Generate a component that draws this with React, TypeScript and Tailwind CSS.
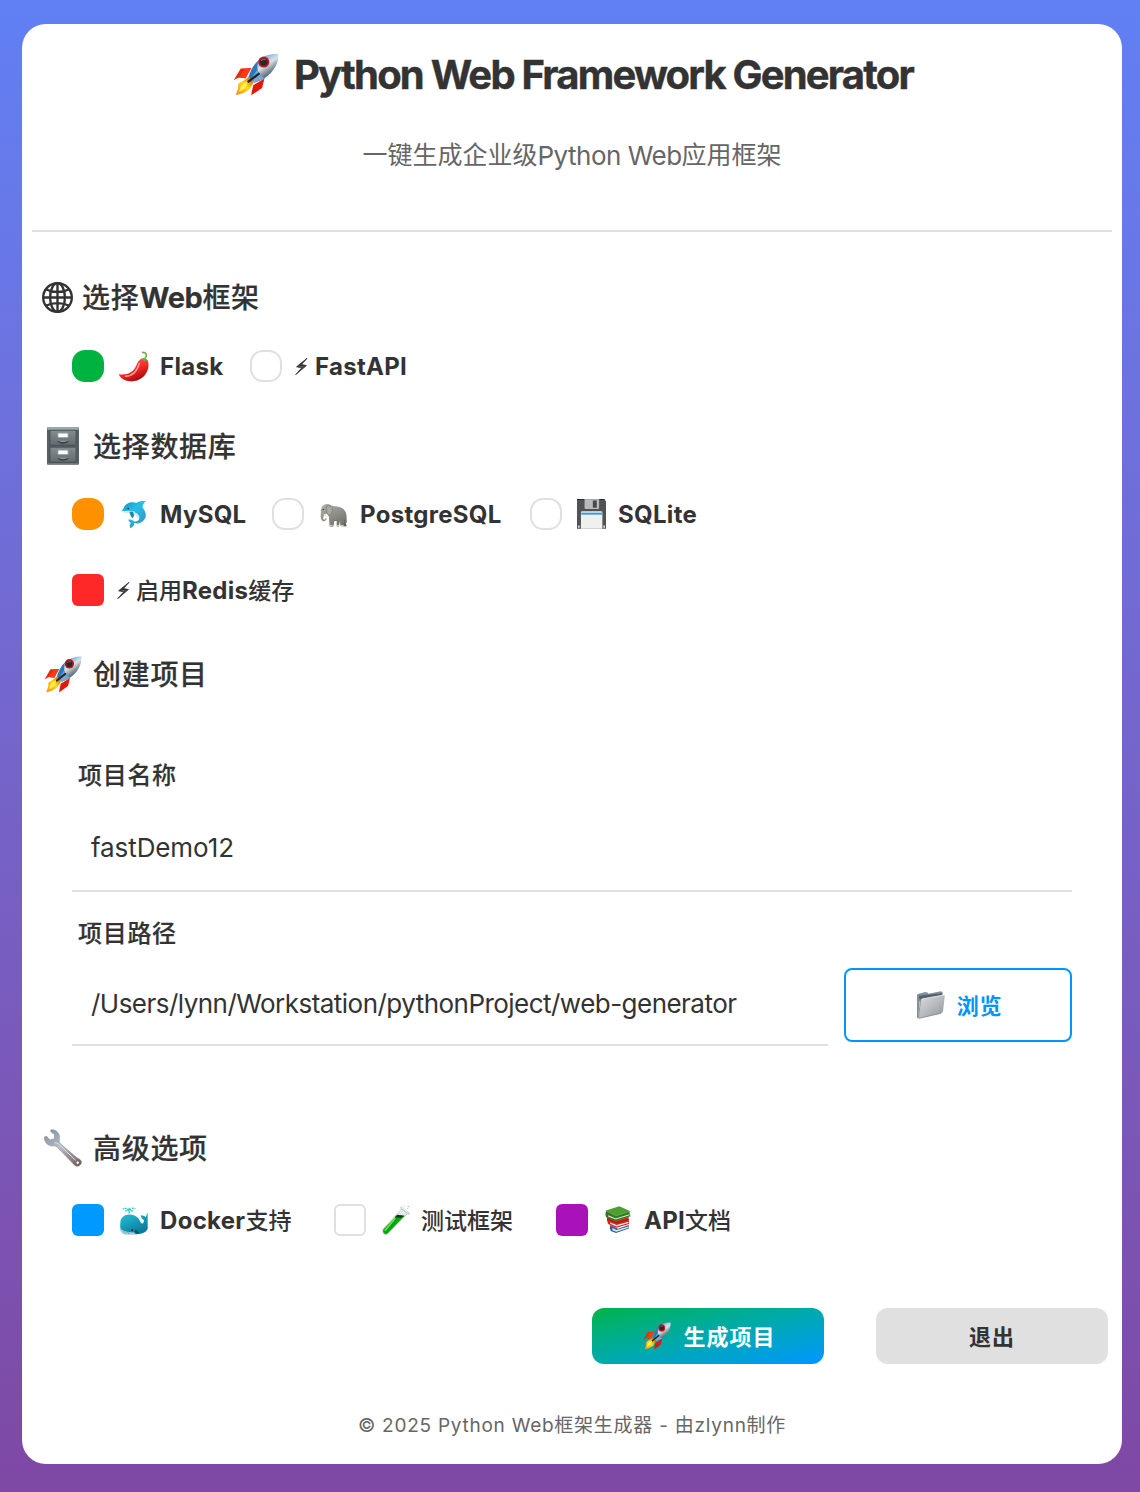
import type { ReactNode } from "react";

type IconProps = { className?: string };

function Rocket({ className = "" }: IconProps) {
  return (
    <svg viewBox="0 0 136 128" className={className} preserveAspectRatio="none">
      <defs>
        <linearGradient id="rk" x1="0.3" y1="0.2" x2="0.75" y2="0.85">
          <stop offset="0" stopColor="#6fa5d8" />
          <stop offset="0.4" stopColor="#dbe3e6" />
          <stop offset="0.65" stopColor="#8b989e" />
          <stop offset="1" stopColor="#16466f" />
        </linearGradient>
        <linearGradient id="rf" x1="1" y1="0" x2="0" y2="1">
          <stop offset="0" stopColor="#d7420b" />
          <stop offset="0.45" stopColor="#ffd91c" />
          <stop offset="1" stopColor="#f58a12" />
        </linearGradient>
      </defs>
      <path d="M54 45 23 46 2 81 17 73 37 75Z" fill="#e92a0c" />
      <path d="M54 45 35 49 18 73 37 75Z" fill="#ff3b17" />
      <path d="M93 76 86 104 54 126 56 112 60 96Z" fill="#e3170a" />
      <path d="M48 70 34 80 16 91 15 106 8 126 31 119 49 108 61 87Z" fill="url(#rf)" />
      <path d="M43 84 24 97 18 115 38 104Z" fill="#fff04a" />
      <path d="M134 2C111 1 92 8 77 20 62 34 52 52 46 71L64 88C84 82 101 72 113 58 127 42 136 21 134 2Z" fill="url(#rk)" />
      <path d="M75 22C60 36 52 54 46 71L64 88 94 75C78 70 66 52 75 22Z" fill="#2d77bd" />
      <path d="M72 50 55 75 64 88 94 75C84 72 77 62 72 50Z" fill="#77a9d1" />
      <path d="M76 62 46 85" stroke="#22262c" strokeWidth="7" strokeLinecap="round" />
      <circle cx="91" cy="27" r="16.5" fill="#c91119" />
      <circle cx="91" cy="27" r="11" fill="#27292e" />
      <path d="M84 24a9 9 0 0 1 12-4" stroke="#777f86" strokeWidth="3" fill="none" />
    </svg>
  );
}

function Globe({ className = "" }: IconProps) {
  return (
    <svg viewBox="0 0 92 92" className={className} fill="none" stroke="#333" strokeWidth="7">
      <circle cx="46" cy="46" r="42.5" />
      <ellipse cx="46" cy="46" rx="22" ry="42.5" />
      <path d="M46 3V89M3 46H89M13 22C31 32 61 32 79 22M13 70C31 60 61 60 79 70" />
    </svg>
  );
}

function Bolt({ className = "" }: IconProps) {
  return (
    <svg viewBox="0 0 38 52" className={className}>
      <path d="M36 1 4 27 20 30 1 51 34 23 19 20Z" fill="#333" stroke="#333" strokeWidth="2.5" strokeLinejoin="round" />
      <path d="M13 24.5 27 27 24 29 11 26Z" fill="#fff" opacity="0.3" />
    </svg>
  );
}

function Pepper({ className = "" }: IconProps) {
  return (
    <svg viewBox="0 0 92 92" className={className}>
      <defs>
        <linearGradient id="pp" x1="0.3" y1="0.2" x2="0.7" y2="0.9">
          <stop offset="0" stopColor="#ff5146" />
          <stop offset="0.6" stopColor="#e5201f" />
          <stop offset="1" stopColor="#a50c10" />
        </linearGradient>
      </defs>
      <path d="M2 69C28 73 47 62 54 43 59 28 67 21 78 23 90 23 92 38 90 50 84 78 60 92 35 90 18 88 7 80 2 69Z" fill="url(#pp)" />
      <path d="M63 37C57 60 42 74 22 75" stroke="#ff9d95" strokeWidth="4" strokeLinecap="round" fill="none" />
      <path d="M64 27C70 18 84 17 91 32L84 28 78 31 73 25Z" fill="#76a83b" />
      <path d="M81 21C88 12 84 4 73 4" stroke="#79aa43" strokeWidth="5" strokeLinecap="round" fill="none" />
    </svg>
  );
}

function Cabinet({ className = "" }: IconProps) {
  return (
    <svg viewBox="0 0 96 113" className={className}>
      <defs>
        <linearGradient id="cb" x1="0" y1="0" x2="0" y2="1">
          <stop offset="0" stopColor="#838e91" />
          <stop offset="1" stopColor="#626c70" />
        </linearGradient>
      </defs>
      <rect width="96" height="113" rx="3" fill="#566166" />
      <rect x="1" width="94" height="8" rx="2" fill="#a2adb0" />
      {[9, 60].map((y) => (
        <g key={y}>
          <rect x="9" y={y} width="78" height="45" fill="url(#cb)" stroke="#3c454a" strokeWidth="2" />
          <rect x="31" y={y + 7} width="34" height="16" rx="2" fill="#929b9e" />
          <rect x="34" y={y + 10} width="28" height="11" fill="#fff" />
          <path d={`M33 ${y + 32}Q48 ${y + 43} 63 ${y + 32}`} fill="none" stroke="#353e42" strokeWidth="7" />
          <path d={`M34 ${y + 31}Q48 ${y + 37} 62 ${y + 31}`} fill="none" stroke="#8d999e" strokeWidth="4" />
        </g>
      ))}
      <path d="M1 110H95" stroke="#8b979b" strokeWidth="2" />
    </svg>
  );
}

function Dolphin({ className = "" }: IconProps) {
  return (
    <svg viewBox="0 0 80 88" className={className}>
      <defs>
        <linearGradient id="dl" x1="0" y1="0" x2="0.8" y2="1">
          <stop offset="0" stopColor="#0b8fbd" />
          <stop offset="0.45" stopColor="#28bdeb" />
          <stop offset="1" stopColor="#3794b8" />
        </linearGradient>
      </defs>
      <path d="M5 36C22 44 28 38 38 42 54 50 60 62 54 70 66 74 73 60 66 42L40 26Z" fill="#d2e9ef" />
      <path d="M2 34C6 31 9 29 10 25 16 9 34 4 49 9 57 3 68 2 77 3 71 9 68 15 67 22 81 39 81 57 66 66 56 73 46 72 41 69 44 75 40 80 31 86 27 80 28 74 32 69 27 66 24 63 25 59 33 59 38 61 42 65 58 66 63 52 52 42 40 32 20 37 2 34Z" fill="url(#dl)" />
      <path d="M3 34C18 37 29 31 44 37" fill="none" stroke="#d7f1f6" strokeWidth="3" />
      <path d="M37 35C43 42 43 51 37 55 31 50 29 43 28 36Z" fill="#1689b0" />
      <circle cx="24" cy="26" r="2.5" fill="#123" />
    </svg>
  );
}

function Elephant({ className = "" }: IconProps) {
  return (
    <svg viewBox="0 0 84 74" className={className}>
      <defs>
        <linearGradient id="el" x1="0" y1="0" x2="0.6" y2="1">
          <stop offset="0" stopColor="#b3b2ac" />
          <stop offset="1" stopColor="#75746f" />
        </linearGradient>
      </defs>
      <path d="M27 38 31 70 40 70 42 54 59 52 71 70 80 69 74 43Z" fill="#62615c" />
      <path d="M6 11C13 0 27 1 35 8 49 10 66 11 74 22 82 32 79 44 81 57L76 60 74 43 71 69 62 69 59 50C53 54 47 53 43 51L38 69 29 69 27 41 20 31C14 35 8 40 10 48 13 51 16 49 16 45L20 46C18 56 8 57 4 49 -1 38 5 30 2 22Z" fill="url(#el)" />
      <path d="M19 9C30 3 41 12 36 26 33 37 25 39 20 29Z" fill="#a9a8a2" stroke="#777670" strokeWidth="2" />
      <path d="M12 33C15 39 19 42 25 41" stroke="#f4efdc" strokeWidth="4" fill="none" />
      <circle cx="10" cy="19" r="2" fill="#333" />
      <path d="M50 51 50 70 57 70 60 49" fill="#777670" />
      <path d="M29 67H38M62 67H71M50 67H57" stroke="#d0ccc0" strokeWidth="3" />
    </svg>
  );
}

function Floppy({ className = "" }: IconProps) {
  return (
    <svg viewBox="0 0 88 90" className={className}>
      <path d="M0 0H83L88 6V90H0Z" fill="#505254" />
      <path d="M23 0H67V27Q67 30 64 30H26Q23 30 23 27Z" fill="#b8babd" />
      <rect x="48" y="4" width="12" height="22" fill="#484a4c" />
      <path d="M12 41Q12 37 16 37H73Q77 37 77 41V90H12Z" fill="#f0f0ef" />
      <path d="M13 41H76V47H13Z" fill="#389bda" />
      <path d="M3 80H8V87H3ZM80 80H85V87H80Z" fill="#ddd" />
      <path d="M0 1H22M68 1H84" stroke="#292b2c" strokeWidth="3" />
    </svg>
  );
}

function Folder({ className = "" }: IconProps) {
  return (
    <svg viewBox="0 0 84 84" className={className}>
      <defs>
        <linearGradient id="fo" x1="0" y1="0" x2="1" y2="1">
          <stop offset="0" stopColor="#dadcdf" />
          <stop offset="0.5" stopColor="#b9bbc0" />
          <stop offset="1" stopColor="#8e9197" />
        </linearGradient>
      </defs>
      <path d="M0 13Q0 8 5 8L25 3 33 5 34 8 72 1 77 4V11L8 31 3 83 0 79Z" fill="#82909a" />
      <path d="M5 14 75 7V14L8 26Z" fill="#53616c" />
      <path d="M11 28Q11 24 16 23L80 11Q84 11 83 17L78 61Q77 66 72 67L6 82Q3 82 4 78Z" fill="url(#fo)" />
      <path d="M14 24 81 12" stroke="#f2f3f5" strokeWidth="2" />
      <path d="M11 28 4 79 6 82 72 67" stroke="#68747d" strokeWidth="2" fill="none" />
    </svg>
  );
}

function Wrench({ className = "" }: IconProps) {
  return (
    <svg viewBox="0 0 114 114" className={className}>
      <defs>
        <linearGradient id="wr" x1="0.1" y1="0" x2="0.9" y2="1">
          <stop offset="0" stopColor="#82929e" />
          <stop offset="0.45" stopColor="#b9bec6" />
          <stop offset="1" stopColor="#745f62" />
        </linearGradient>
      </defs>
      <path d="M21 2 20 8 31 16 31 29 18 33 7 21 1 25C1 40 10 49 24 51 34 49 38 52 43 58L91 108C100 118 115 108 112 97 110 91 103 89 97 85L49 44C42 36 49 27 45 16 41 7 32 1 21 2Z" fill="url(#wr)" stroke="#7b868f" strokeWidth="1.5" />
      <path d="M32 41C40 41 45 46 51 52L95 94" stroke="#dce2e8" strokeWidth="3" fill="none" />
      <circle cx="101" cy="101" r="5" fill="#fff" stroke="#63484a" strokeWidth="2" />
    </svg>
  );
}

function Whale({ className = "" }: IconProps) {
  return (
    <svg viewBox="0 0 86 88" className={className}>
      <defs>
        <linearGradient id="wh" x1="0" y1="0" x2="0.6" y2="1">
          <stop offset="0" stopColor="#27c4dc" />
          <stop offset="1" stopColor="#087a9a" />
        </linearGradient>
      </defs>
      <path d="M30 23C30 9 22 4 10 9M30 23C30 9 38 3 49 9M30 22V3M25 14 16 15M35 14 44 16" stroke="#3ccac2" strokeWidth="4" fill="none" strokeDasharray="7 2" />
      <path d="M3 52C3 34 18 25 31 26 48 25 60 37 65 50 68 57 75 52 75 43 68 40 65 34 66 28 73 29 78 31 80 34L86 20V70C80 82 65 86 46 86H18C7 83 1 72 3 52Z" fill="url(#wh)" />
      <path d="M2 68C10 75 26 80 44 80L50 86H17C7 83 3 77 2 68Z" fill="#a3ced6" />
      <path d="M13 75 19 83M24 78 29 85" stroke="#398fa4" strokeWidth="2" fill="none" />
      <path d="M48 72Q57 73 60 84 51 85 46 78Z" fill="#075672" />
      <circle cx="39" cy="73" r="3" fill="#171d22" />
    </svg>
  );
}

function TestTube({ className = "" }: IconProps) {
  return (
    <svg viewBox="0 0 84 90" className={className}>
      <path d="M59 12 76 26 18 86C9 93-1 84 3 73Z" fill="#e6ebe8" stroke="#a9b5ae" strokeWidth="2" />
      <path d="M46 30 67 33 18 84C9 91 0 83 5 73Z" fill="#06a514" />
      <path d="M46 29 68 32 58 38 38 37Z" fill="#053e10" />
      <path d="M38 41 10 76" stroke="#60e552" strokeWidth="5" strokeLinecap="round" />
      <path d="M58 8 80 25" stroke="#c5ceca" strokeWidth="7" strokeLinecap="round" />
      <path d="M60 8 78 22" stroke="#f8fbfa" strokeWidth="3" strokeLinecap="round" />
      <path d="M65 3h3M77 5h5M76 10h3" stroke="#39d74d" strokeWidth="2" />
    </svg>
  );
}

function Books({ className = "" }: IconProps) {
  return (
    <svg viewBox="0 0 78 82" className={className}>
      <path d="M15 58 39 69 72 58V68L33 82 17 76Q12 66 15 58Z" fill="#365f9c" />
      <path d="M22 67 34 73 71 62V66L34 78 22 74Z" fill="#e4e8f2" />
      <path d="M6 31 38 43 71 33 73 55 34 66 9 55Q3 43 6 31Z" fill="#d8211c" />
      <path d="M15 50 35 58 71 48V52L35 62 15 54Z" fill="#f4eee4" />
      <path d="M6 40 35 51 72 41" stroke="#8d1314" strokeWidth="2" fill="none" />
      <path d="M3 15Q-1 26 3 34L32 46 77 31 73 17Z" fill="#2f7a29" />
      <path d="M9 28 32 38 74 25V28L32 41 9 32Z" fill="#e9efda" />
      <path d="M2 14 43 1 77 16 33 32Z" fill="#4e9f32" />
      <path d="M4 15 33 29 76 16" stroke="#6cad45" strokeWidth="2" fill="none" />
    </svg>
  );
}

function Heading({ icon, children }: { icon: ReactNode; children: ReactNode }) {
  return (
    <h2 className="flex h-[50px] items-center pl-5 text-[28px] font-medium leading-[46px] tracking-[0.7px] [-webkit-text-stroke:0.2px]">
      {icon}
      <span>{children}</span>
    </h2>
  );
}

function Mark({ round = false, className }: { round?: boolean; className: string }) {
  return <span className={`box-border h-8 w-8 shrink-0 ${round ? "rounded-[13px]" : "rounded-md"} ${className}`} />;
}

function Option({
  mark,
  icon,
  latin = "",
  before = "",
  after = "",
  className = "",
}: {
  mark: ReactNode;
  icon: ReactNode;
  latin?: string;
  before?: string;
  after?: string;
  className?: string;
}) {
  return (
    <div className={`flex h-8 shrink-0 items-center text-[23px] font-medium leading-[30px] ${className}`}>
      {mark}
      {icon}
      <span className="pt-[2px]">
        {before}
        <b className="text-[24px] leading-none tracking-[0.3px]">{latin}</b>
        {after}
      </span>
    </div>
  );
}

const empty = "border-2 border-[#e0e0e0] bg-white";

export default function App() {
  return (
    <div className="h-[1492px] w-[1140px] overflow-hidden bg-linear-to-b from-[#6080f4] to-[#7e48a4] pl-[22px] pt-6 font-['Inter','Noto_Sans_CJK_SC',sans-serif] text-[#333]">
      <main className="flex h-[1440px] w-[1100px] flex-col whitespace-nowrap rounded-[24px] bg-white">
        <header className="mx-[10px] h-[208px] border-b-2 border-[#e0e0e0]">
          <h1 className="flex h-[102px] items-center pl-[201px]">
            <Rocket className="mb-px h-[43px] w-[46px]" />
            <span className="ml-[15px] text-[40px] font-bold tracking-[-1.8px] [-webkit-text-stroke:0.4px]">
              Python Web Framework Generator
            </span>
          </h1>
          <p className="flex h-[60px] items-center justify-center text-[25px] text-[#666]">
            一键生成企业级<span className="pb-[2px] text-[26px] tracking-[-0.5px]">Python Web</span>应用框架
          </p>
        </header>

        <section className="mt-[41px]">
          <Heading icon={<Globe className="mb-[2px] mr-[9px] h-[31px] w-[31px]" />}>
            选择<b className="text-[29px] leading-none tracking-[-0.4px]">Web</b>框架
          </Heading>
          <div className="mt-[27px] flex pl-[50px]">
            <Option
              className="w-[178px]"
              mark={<Mark round className="bg-[#00b341]" />}
              icon={<Pepper className="ml-[14px] mr-[11px] h-[31px] w-[31px]" />}
              latin="Flask"
            />
            <Option
              mark={<Mark round className={empty} />}
              icon={<Bolt className="ml-[13px] mr-[7px] h-[17px] w-[13px]" />}
              latin="FastAPI"
            />
          </div>
        </section>

        <section className="mt-[40px]">
          <Heading icon={<Cabinet className="mb-[2px] ml-[5px] mr-[14px] h-[38px] w-8" />}>选择数据库</Heading>
          <div className="mt-[26px] flex pl-[50px]">
            <Option
              className="w-[200px]"
              mark={<Mark round className="bg-[#ff9100]" />}
              icon={<Dolphin className="ml-[16px] mr-[13px] h-[29px] w-[27px]" />}
              latin="MySQL"
            />
            <Option
              className="w-[258px]"
              mark={<Mark round className={empty} />}
              icon={<Elephant className="ml-[16px] mr-[12px] mt-[2px] h-[25px] w-[28px]" />}
              latin="PostgreSQL"
            />
            <Option
              mark={<Mark round className={empty} />}
              icon={<Floppy className="ml-[15px] mr-[12px] h-[30px] w-[29px]" />}
              latin="SQLite"
            />
          </div>
          <Option
            className="ml-[50px] mt-[44px]"
            mark={<Mark className="bg-[#ff2828]" />}
            icon={<Bolt className="ml-[13px] mr-[6px] h-[17px] w-[13px]" />}
            before="启用"
            latin="Redis"
            after="缓存"
          />
        </section>

        <section className="mt-[44px]">
          <Heading icon={<Rocket className="mb-[2px] ml-[2px] mr-[11px] h-[37px] w-[38px]" />}>创建项目</Heading>
          <div className="mx-[50px] mt-[56px]">
            <label className="flex h-10 items-center pl-[6px] text-[24px] font-medium tracking-[0.7px] [-webkit-text-stroke:0.2px]">
              项目名称
            </label>
            <div className="flex h-[96px] items-center border-b-2 border-[#e0e0e0] pl-[19px] pt-[9px] text-[26px] tracking-[-0.1px]">
              fastDemo12
            </div>
            <label className="mt-[22px] flex h-10 items-center pl-[6px] text-[24px] font-medium tracking-[0.7px] [-webkit-text-stroke:0.2px]">
              项目路径
            </label>
            <div className="mt-[14px] flex gap-4">
              <div className="flex h-[78px] w-[756px] items-center border-b-2 border-[#e0e0e0] pb-[5px] pl-[19px] text-[26px] tracking-[-0.53px]">
                /Users/lynn/Workstation/pythonProject/web-generator
              </div>
              <button className="flex h-[74px] w-[228px] items-center justify-center rounded-lg border-2 border-[#0095ff] pl-[3px] text-[22px] font-bold tracking-[0.8px] text-[#0095ff]">
                <Folder className="mr-[12px] h-7 w-7" />
                <span className="pt-[2px]">浏览</span>
              </button>
            </div>
          </div>
        </section>

        <section className="mt-[78px]">
          <Heading icon={<Wrench className="mb-[2px] ml-[2px] mr-[11px] h-[38px] w-[38px]" />}>高级选项</Heading>
          <div className="mt-[30px] flex pl-[50px]">
            <Option
              className="w-[262px]"
              mark={<Mark className="bg-[#0099ff]" />}
              icon={<Whale className="ml-[15px] mr-[12px] h-[29px] w-[29px]" />}
              latin="Docker"
              after="支持"
            />
            <Option
              className="w-[222px]"
              mark={<Mark className={empty} />}
              icon={<TestTube className="ml-[16px] mr-[11px] h-[30px] w-[28px]" />}
              before="测试框架"
            />
            <Option
              mark={<Mark className="bg-[#a812b8]" />}
              icon={<Books className="mb-[2px] ml-[17px] mr-[13px] h-[27px] w-[26px]" />}
              latin="API"
              after="文档"
            />
          </div>
        </section>

        <div className="mr-[14px] mt-[72px] flex justify-end gap-[52px]">
          <button className="flex h-14 w-[232px] items-center justify-center rounded-xl bg-linear-to-br from-[#00b341] to-[#0095ff] pl-[2px] text-[22px] font-bold tracking-[1px] text-white">
            <Rocket className="ml-px mr-[12px] h-[28px] w-[28px]" />
            <span className="pt-[2px]">生成项目</span>
          </button>
          <button className="flex h-14 w-[232px] items-center justify-center rounded-xl bg-[#e0e0e0] pt-[2px] text-[22px] font-bold tracking-[1px]">
            退出
          </button>
        </div>

        <footer className="mt-[42px] flex h-10 items-center justify-center text-[19px] tracking-[0.75px] text-[#666]">
          © 2025 Python Web框架生成器 - 由zlynn制作
        </footer>
      </main>
    </div>
  );
}
